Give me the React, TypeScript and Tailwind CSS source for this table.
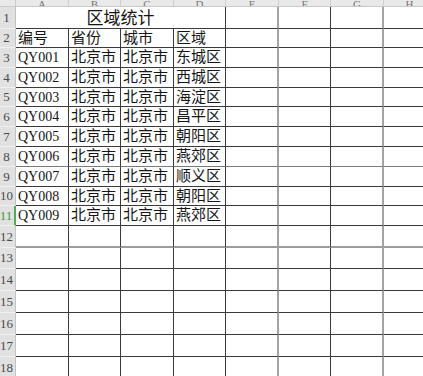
const colWidths = [53, 52, 53, 52, 53, 52, 53, 52]
const letters = ['A', 'B', 'C', 'D', 'E', 'F', 'G', 'H']

// row heights for rows 2..18 (row 1 is the merged title row)
const heights: Record<number, string> = {
  2: 'h-[19px]',
  3: 'h-[20px]',
  4: 'h-[20px]',
  5: 'h-[19px]',
  6: 'h-[20px]',
  7: 'h-[20px]',
  8: 'h-[20px]',
  9: 'h-[20px]',
  10: 'h-[19px]',
  11: 'h-[20px]',
  12: 'h-[22px]',
  13: 'h-[21px]',
  14: 'h-[22px]',
  15: 'h-[22px]',
  16: 'h-[22px]',
  17: 'h-[22px]',
  18: 'h-[22px]',
}

const rows: string[][] = [
  ['编号', '省份', '城市', '区域'],
  ['QY001', '北京市', '北京市', '东城区'],
  ['QY002', '北京市', '北京市', '西城区'],
  ['QY003', '北京市', '北京市', '海淀区'],
  ['QY004', '北京市', '北京市', '昌平区'],
  ['QY005', '北京市', '北京市', '朝阳区'],
  ['QY006', '北京市', '北京市', '燕郊区'],
  ['QY007', '北京市', '北京市', '顺义区'],
  ['QY008', '北京市', '北京市', '朝阳区'],
  ['QY009', '北京市', '北京市', '燕郊区'],
]

const widthClass = ['w-[53px]', 'w-[52px]', 'w-[53px]', 'w-[52px]', 'w-[53px]', 'w-[52px]', 'w-[53px]', 'w-[52px]']

function cellBorder(col: number) {
  if (col === 4 || col === 6) return 'border-r-2 border-r-[#a3a3a3]'
  return 'border-r border-r-[#3a3a3a]'
}

function RowHead({ n, active }: { n: number; active?: boolean }) {
  return (
    <div
      className={`w-[16px] shrink-0 h-full flex items-center justify-center pr-[2px] bg-[#e1e1e1] border-b border-b-[#f0f0f0] text-[13px] ${
        active ? 'text-[#3f9b3f] border-r-2 border-r-[#4caf50]' : 'text-[#4a4a4a] border-r border-r-[#c2c2c2]'
      }`}
      style={{ fontFamily: '"Liberation Serif", serif' }}
    >
      {n}
    </div>
  )
}

export default function App() {
  return (
    <div
      className="w-[423px] h-[376px] overflow-hidden bg-white text-[#151515]"
      style={{ fontFamily: '"Liberation Serif", "Noto Sans CJK SC", serif' }}
    >
      {/* column letters, mostly cut off */}
      <div className="flex h-[7px] bg-[#e9e9e9] border-b border-b-[#c9c9c9] overflow-hidden">
        <div className="w-[16px] shrink-0 border-r border-r-[#c9c9c9]" />
        {colWidths.map((_, i) => (
          <div
            key={letters[i]}
            className={`${widthClass[i]} shrink-0 flex items-end justify-center border-r border-r-[#cfcfcf] text-[11px] leading-[11px] text-[#777]`}
          >
            <span className="translate-y-[4px]">{letters[i]}</span>
          </div>
        ))}
      </div>

      {/* row 1: merged title */}
      <div className="flex h-[22px]">
        <RowHead n={1} />
        <div className="w-[210px] shrink-0 flex items-center justify-center border-r border-r-[#3a3a3a] border-b border-b-[#3a3a3a] text-[17px] pt-[2px]">
          区域统计
        </div>
        {colWidths.slice(4).map((_, i) => (
          <div key={i} className={`${widthClass[i + 4]} shrink-0 border-b border-b-[#3a3a3a] ${cellBorder(i + 4)}`} />
        ))}
      </div>

      {Array.from({ length: 17 }, (_, k) => {
        const n = k + 2
        const data = rows[k] ?? []
        const bottom = n === 12 ? 'border-b-2 border-b-[#9d9d9d]' : n === 8 ? 'border-b border-b-[#7a7a7a]' : 'border-b border-b-[#3a3a3a]'
        return (
          <div key={n} className={`flex ${heights[n]}`}>
            <RowHead n={n} active={n === 11} />
            {colWidths.map((_, c) => {
              const text = data[c]
              const latin = text && /^QY/.test(text)
              return (
                <div
                  key={c}
                  className={`${widthClass[c]} shrink-0 flex items-center overflow-visible whitespace-nowrap pl-[2px] ${
                    latin ? 'text-[14px]' : 'text-[15px]'
                  } ${bottom} ${cellBorder(c)}`}
                >
                  {text}
                </div>
              )
            })}
          </div>
        )
      })}
    </div>
  )
}
